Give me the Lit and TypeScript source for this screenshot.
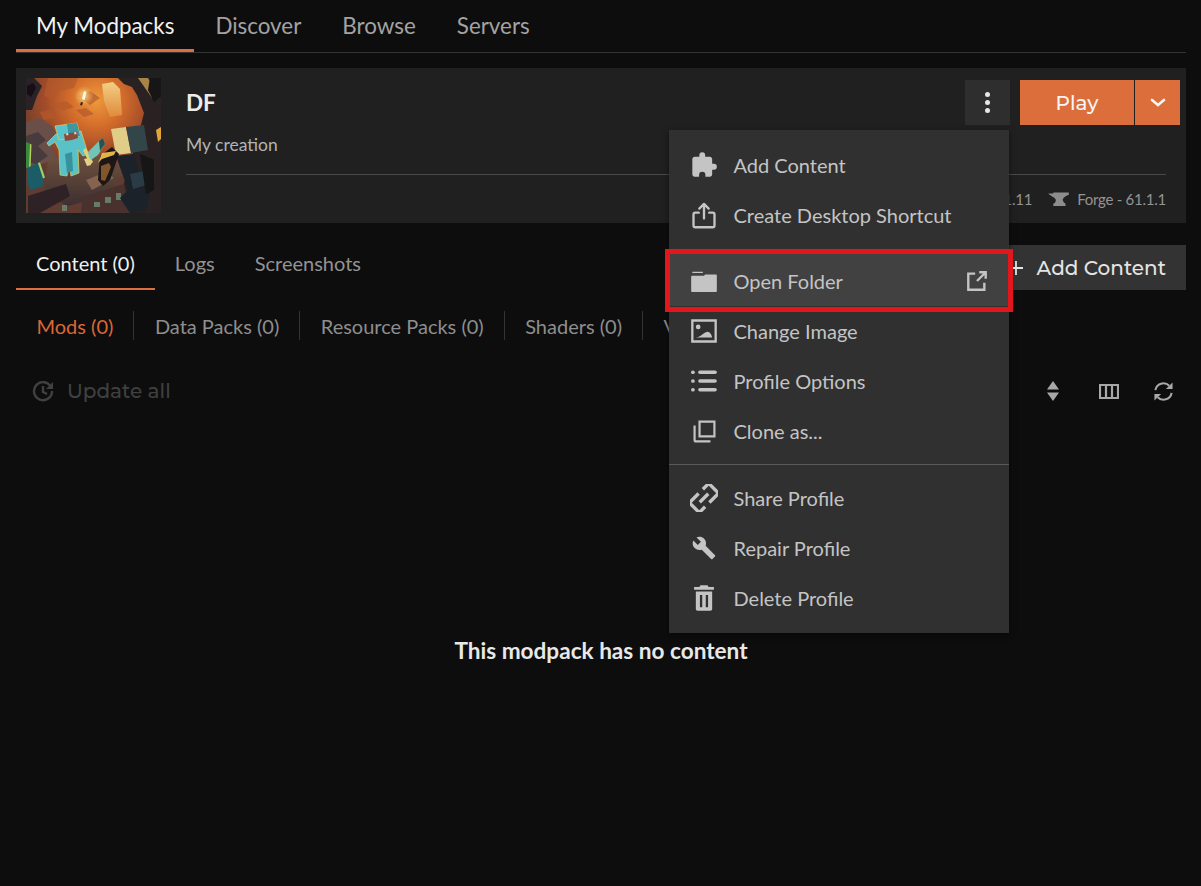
import { LitElement, html, css, svg } from "lit";
import { customElement } from "lit/decorators.js";

const icons: Record<string, unknown> = {
  puzzle: svg`<path fill="currentColor" d="M4 5h4V3.500a2.500 2.500 0 0 1 5 0V5h4c1.100 0 2 .900 2 2v4h1.500a2.500 2.500 0 0 1 0 5H19v4c0 1.100-.900 2-2 2h-3.800v-1.500a2.700 2.700 0 0 0-5.400 0V22H4c-1.100 0-2-.900-2-2V7c0-1.100.900-2 2-2z"/>`,
  upload: svg`<path fill="none" stroke="currentColor" stroke-width="2" stroke-linecap="round" stroke-linejoin="round" d="M12 15V3M8 6.500 12 2.500l4 4M7.500 10H4.500a1.500 1.500 0 0 0-1.500 1.500V21a1.500 1.500 0 0 0 1.500 1.500h15A1.500 1.500 0 0 0 21 21v-9.500A1.500 1.500 0 0 0 19.500 10h-3"/>`,
  folder: svg`<path fill="currentColor" d="M2 4h9v1.200H2zM2 7.500h10l1-1h9.200c.4 0 .8.400.8.800v13.200c0 .500-.400 1-.800 1H2c-.500 0-1-.400-1-1V8.500c0-.600.400-1 1-1z"/>`,
  external: svg`<path fill="none" stroke="currentColor" stroke-width="2.600" d="M10 4H2.500v17.500H20V14M12 12 21 3M14.500 2.500H21.500V9.500"/>`,
  image: svg`<path fill="none" stroke="currentColor" stroke-width="2" d="M2 3h20v18H2z"/><circle cx="7" cy="8.500" r="2" fill="currentColor"/><path fill="currentColor" d="M5 17.500c3-.2 4.500-1.500 7-3.500 1.500-1.200 3-2 4.500-1 1.200.8 2 2.500 2.500 4.500z"/>`,
  list: svg`<g fill="currentColor"><circle cx="2.500" cy="4.500" r="1.600"/><circle cx="2.500" cy="12" r="1.600"/><circle cx="2.500" cy="19.500" r="1.600"/><rect x="7" y="3" width="16" height="3" rx="1.500"/><rect x="7" y="10.500" width="16" height="3" rx="1.500"/><rect x="7" y="18" width="16" height="3" rx="1.500"/></g>`,
  clone: svg`<path fill="none" stroke="currentColor" stroke-width="2.200" transform="translate(12 12) scale(.85) translate(-12 -12)" d="M7.500 2.500h15v15h-15zM2.500 6.500v14.500a1.500 1.500 0 0 0 1.500 1.500h14.500"/>`,
  link: svg`<g fill="none" stroke="currentColor" stroke-width="2.500" transform="rotate(-45 12 12) translate(12 12) scale(1.150) translate(-12 -12)"><path d="M11.500 6.800H1.800v10.400H8"/><path d="M12.500 17.200h9.700V6.800H16"/><path d="M7.500 12H16.500"/></g>`,
  wrench: svg`<path fill="currentColor" transform="translate(12 12) scale(.88) translate(-12 -12)" d="M22.700 19l-9.100-9.100c.9-2.300.4-5-1.500-6.900-2-2-5-2.400-7.400-1.300L9 6 6 9 1.600 4.700C.4 7.100.9 10.100 2.900 12.100c1.900 1.900 4.600 2.400 6.900 1.500l9.100 9.100c.4.4 1 .4 1.400 0l2.300-2.300c.5-.4.5-1.100.1-1.400z"/>`,
  trash: svg`<path fill="currentColor" fill-rule="evenodd" d="M9 1h6l1 1.500h4.500V5h-17V2.500H8zM5 6.500h14v15c0 .8-.7 1.500-1.500 1.500h-11C5.700 23 5 22.300 5 21.500zM8.500 9.500v10.500h2V9.500zM13.500 9.500v10.500h2V9.500z"/>`,
};

const menuGroups = [
  [
    { icon: "puzzle", label: "Add Content" },
    { icon: "upload", label: "Create Desktop Shortcut" },
  ],
  [
    { icon: "folder", label: "Open Folder", hover: true },
    { icon: "image", label: "Change Image" },
    { icon: "list", label: "Profile Options" },
    { icon: "clone", label: "Clone as..." },
  ],
  [
    { icon: "link", label: "Share Profile" },
    { icon: "wrench", label: "Repair Profile" },
    { icon: "trash", label: "Delete Profile" },
  ],
];

// the pack artwork, built out of blocks
const art = svg`<svg class="art" viewBox="0 0 135 135" width="135" height="135">
  <defs>
    <radialGradient id="glow" gradientUnits="userSpaceOnUse" cx="70" cy="22" r="85">
      <stop offset="0" stop-color="#ee9a3c"/>
      <stop offset=".3" stop-color="#d56e2c"/>
      <stop offset=".6" stop-color="#a34c2a"/>
      <stop offset="1" stop-color="#5e3a30"/>
    </radialGradient>
    <linearGradient id="floor" x1="0" y1="0" x2="0" y2="1">
      <stop offset="0" stop-color="#72553f"/>
      <stop offset="1" stop-color="#3d2e30"/>
    </linearGradient>
    <linearGradient id="lit" x1="0" y1="0" x2="0" y2="1">
      <stop offset="0" stop-color="#f3cf86"/>
      <stop offset="1" stop-color="#e08a3a"/>
    </linearGradient>
    <radialGradient id="halo">
      <stop offset="0" stop-color="#ffe9a0" stop-opacity=".85"/>
      <stop offset="1" stop-color="#ffc860" stop-opacity="0"/>
    </radialGradient>
    <filter id="soft"><feGaussianBlur stdDeviation=".55"/></filter>
  </defs>
  <g filter="url(#soft)">
    <rect width="135" height="135" fill="url(#glow)"/>
    <g fill="#b35a2c" opacity=".7">
      <path d="M22 0h30l-4 10-14 3-6 8-10-3z"/>
      <path d="M52 18l12-5 10 7-10 7z"/>
      <path d="M28 26l12-3 8 6-12 4z"/>
      <path d="M50 32l10-2 8 6-10 3z"/>
      <path d="M14 34l10-2 6 8-12 2z"/>
    </g>
    <path fill="url(#lit)" d="M76 6l11-2 7 7 2 26-12 2-6-16z"/>
    <path fill="#6b5048" d="M0 44l14-4 12 8 8 14-8 6 4 12-14 6L0 90z"/>
    <path fill="#463a3e" d="M0 58l12-4 8 8-8 6 10 10-12 8-10-2z"/>
    <path fill="url(#floor)" d="M22 82l30-8 30 4 16 14-14 24-42 12-24-12z"/>
    <path fill="#846350" d="M60 102l20-8 8 6-22 12z"/>
    <path fill="#2d2326" d="M2 118l38-12 4 12-30 17H2z"/>
    <path fill="#48302e" d="M55 135l2-16 44-14 12 30z"/>
    <g fill="#6a7a68">
      <rect x="68" y="124" width="6" height="5"/>
      <rect x="79" y="119" width="6" height="6"/>
      <rect x="90" y="115" width="5" height="7"/>
      <rect x="36" y="127" width="5" height="6"/>
    </g>
    <path fill="#292024" d="M92 0h43v135h-30l-7-30 15-50 5-20-7-18-5-8-8-3z"/>
    <path fill="#a98448" d="M112 0h10l8 14-4 6z"/>
    <path fill="#141216" d="M124 0h11v18l-7 6-6-12z"/>
    <path fill="#dfa538" d="M130 52l5-3v12l-3 3z"/>
    <path fill="#2a2226" d="M0 0h8l8 8-5 10-5 14H0z"/>
    <path fill="#131013" d="M1 8l6-3 3 5-5 9-4-3z"/>
    <path fill="#1a2229" d="M90 78l18-2 8 30 10 2-6 24-16 3-10-15 8-8z"/>
    <path fill="#2a3a44" d="M104 96l14-3 3 14-14 4z"/>
    <path fill="#121419" d="M114 76l14 6 0 30-8 4z"/>
    <path fill="#dfcd88" d="M85 51l15-2 5 26-15 2z"/>
    <path fill="#324548" d="M100 49l18-2 4 25-17 3z"/>
    <path fill="#1a1512" d="M74 78l12-9 7 7-9 26-7 6-5-6z"/>
    <path fill="#e1b44a" d="M76 75l14-2-2 4-12 4-4 4z"/>
    <path fill="#80562c" d="M75 88l8-3 2 4-6 14-4-1z"/>
    <path fill="#3a8a3a" d="M0 64l5 2-1 24H0z"/>
    <path fill="#b4d060" d="M4 66l1.500 .5-1 24H3z"/>
    <path fill="#1d5c66" d="M1 90l11-5 6 15-2 9-12 3-3-9z"/>
    <path fill="#9cd468" d="M12 85l2-.5 5 15-2 1z"/>
    <g stroke="#e6cf5a" stroke-width=".7">
      <path fill="#59c2c8" d="M33 72l-4-8-6 4-2-3 9-9 6-1 13-1 6-1 4 13 3 10-5 2-5-6 1 23-8 3-2-12-2 12-7-1z"/>
      <path fill="#59c4cc" d="M29 48l22-3 3 13-21 4z"/>
    </g>
    <path fill="#3b98a0" d="M41 46l10-1 3 13-11 2z"/>
    <path fill="#38929c" d="M39 76l7-2 1 19-6 2z"/>
    <path fill="#8a4c3e" d="M38 56l13-2 1 6-6 2-7 1z"/>
    <path fill="#e6d8cc" d="M40 55.500l2-.5.5 2-2 .5zM48 54.500l2-.5.5 2-2 .5z"/>
    <path fill="#e6cf98" d="M58 81l5-1 2 7-4 1z"/>
    <path fill="#e3d072" d="M57 72l3-2 7 14-3 3z"/>
    <path fill="#72c4b4" d="M62 74l11-11 4-3 2 6-7 11-7 5-2-3z"/>
    <path fill="#2e5050" d="M73 63l4-3 2 6-5 7z"/>
  </g>
  <circle cx="58" cy="18" r="10" fill="url(#halo)"/>
  <path fill="#fffbe0" d="M58 13l2.500 1-2 8-2.500-1z"/>
  <path fill="#3a2418" d="M55 24l2 .5-1 3-2-.5z"/>
</svg>`;

@customElement("app-root")
export class AppRoot extends LitElement {
  static styles = css`
    :host {
      display: block;
      position: relative;
      width: 1201px;
      height: 886px;
      overflow: hidden;
      background: #0d0d0d;
      font-family: Lato, "Liberation Sans", sans-serif;
      color: #a6a6a6;
    }
    .page {
      padding: 0 15px 0 16px;
    }
    .main-tabs {
      display: flex;
      height: 52px;
      border-bottom: 1px solid #333;
    }
    .main-tabs .tab {
      height: 52px;
      box-sizing: border-box;
      padding: 2px 20px 3px;
      display: flex;
      align-items: center;
      font-size: 22.400px;
      margin-right: 1px;
      color: #a3a3a3;
    }
    .main-tabs .tab.on {
      color: #f2f2f2;
      border-bottom: 3px solid #dd6f3e;
      padding-bottom: 0;
    }
    .card {
      margin-top: 15px;
      height: 155px;
      background: #202020;
      display: flex;
    }
    .art {
      display: block;
      margin: 10px 25px 10px 10px;
      flex: none;
    }
    .info {
      flex: 1;
      display: flex;
      flex-direction: column;
      padding: 12px 6px 0 0;
    }
    .head {
      display: flex;
      align-items: center;
      height: 45px;
    }
    .title {
      flex: 1;
      font-size: 22.500px;
      font-weight: 700;
      color: #ececec;
    }
    .kebab {
      width: 45px;
      height: 45px;
      background: #2e2e2e;
      margin-right: 10px;
      display: flex;
      flex-direction: column;
      align-items: center;
      justify-content: center;
      gap: 3px;
    }
    .kebab i {
      width: 5px;
      height: 5px;
      border-radius: 50%;
      background: #e6e6e6;
    }
    .play {
      width: 114px;
      height: 45px;
      background: #dc6e3c;
      color: #f5f5f5;
      font-family: Montserrat, Inter, sans-serif;
      font-size: 20px;
      font-weight: 500;
      display: flex;
      align-items: center;
      justify-content: center;
    }
    .drop {
      width: 45px;
      height: 45px;
      margin-left: 1px;
      background: #dc6e3c;
      display: flex;
      align-items: center;
      justify-content: center;
      color: #f5f5f5;
    }
    .sub {
      font-size: 17.500px;
      margin-top: 8px;
      line-height: 24px;
      color: #b3b3b3;
    }
    .meta {
      margin: 17px 14px 0 0;
      border-top: 1px solid #4a4a4a;
      flex: 1;
      display: flex;
      justify-content: flex-end;
      align-items: center;
      gap: 15px;
      font-size: 15px;
      letter-spacing: -0.25px;
      color: #949494;
    }
    .meta span {
      display: flex;
      align-items: center;
      gap: 7px;
    }
    .content-bar {
      display: flex;
      justify-content: space-between;
      margin-top: 22px;
      height: 45px;
    }
    .sub-tabs {
      display: flex;
    }
    .sub-tabs .tab {
      box-sizing: border-box;
      padding: 0 20px 9px;
      display: flex;
      align-items: center;
      font-size: 20px;
      color: #939393;
    }
    .sub-tabs .tab.on {
      color: #f0f0f0;
      border-bottom: 2px solid #dd6f3e;
      padding-bottom: 7px;
    }
    .add {
      background: #333;
      color: #e4e4e4;
      font-family: Montserrat, Inter, sans-serif;
      font-size: 20px;
      font-weight: 500;
      padding: 0 20px;
      display: flex;
      align-items: center;
      gap: 14px;
    }
    .filters {
      display: flex;
      margin: 21px 0 0 0;
      font-size: 20px;
      color: #8e8e8e;
    }
    .filters span {
      height: 29px;
      display: flex;
      align-items: center;
      padding: 0 20px 0 20.500px;
      border-right: 1px solid #333;
      white-space: nowrap;
    }
    .filters span.on {
      color: #dd6636;
    }
    .filters span.cut {
      border-right: none;
    }
    .tools {
      display: flex;
      align-items: center;
      margin-top: 36px;
      padding-left: 16px;
      height: 30px;
    }
    .update {
      flex: 1;
      display: flex;
      align-items: center;
      gap: 13px;
      color: #404040;
      font-family: Montserrat, Inter, sans-serif;
      font-size: 20px;
      font-weight: 500;
    }
    .tool-icons {
      display: flex;
      align-items: center;
      gap: 34px;
      color: #a8a8a8;
      padding-right: 12px;
    }
    .empty {
      margin-top: 231px;
      text-align: center;
      font-size: 22.600px;
      font-weight: 700;
      color: #e8e8e8;
    }
    .menu {
      position: absolute;
      left: 669px;
      top: 130px;
      width: 340px;
      box-sizing: border-box;
      padding: 10px 0;
      background: #303030;
      box-shadow: 0 2px 6px rgba(0, 0, 0, 0.5);
      color: #c4c4c4;
      font-size: 20px;
    }
    .menu hr {
      border: none;
      height: 1px;
      margin: 8px 0;
      background: #595959;
    }
    .menu hr.first {
      margin: 9px 0 6px;
    }
    .item {
      height: 50px;
      display: flex;
      align-items: center;
      padding: 0 21px;
      gap: 15.500px;
      position: relative;
    }
    .item svg.ic {
      width: 28px;
      height: 28px;
      flex: none;
    }
    .item svg.ic.ext {
      width: 22px;
      height: 22px;
    }
    .item .lbl {
      flex: 1;
    }
    .item.hover {
      background: #414141;
      box-shadow: 0 -2px 0 #414141;
    }
    .item.hover::after {
      content: "";
      position: absolute;
      inset: -7px -4px -6px -4px;
      border: 5px solid #e3161b;
    }
  `;

  render() {
    return html`
      <div class="page">
        <nav class="main-tabs">
          <div class="tab on">My Modpacks</div>
          <div class="tab">Discover</div>
          <div class="tab">Browse</div>
          <div class="tab">Servers</div>
        </nav>

        <section class="card">
          ${art}
          <div class="info">
            <div class="head">
              <div class="title">DF</div>
              <div class="kebab"><i></i><i></i><i></i></div>
              <div class="play">Play</div>
              <div class="drop">
                <svg width="16" height="10" viewBox="0 0 16 10"><path d="M2 2l6 5 6-5" fill="none" stroke="currentColor" stroke-width="2.600" stroke-linecap="round"/></svg>
              </div>
            </div>
            <div class="sub">My creation</div>
            <div class="meta">
              <span>1.21.11</span>
              <span>
                <svg width="23" height="15" viewBox="0 0 22 16"><path fill="#8d8d8d" d="M0 1.500h5.500V0.500H22V3c-2.500 1.200-5.500 2-6.500 5 0 1.500 1 3.500 3 4.500V15H5.500v-2.500c2-1 3-2.500 2.500-4.500C7.500 6 4 5 0 1.500z"/></svg>
                Forge - 61.1.1
              </span>
            </div>
          </div>
        </section>

        <div class="content-bar">
          <div class="sub-tabs">
            <div class="tab on">Content (0)</div>
            <div class="tab">Logs</div>
            <div class="tab">Screenshots</div>
          </div>
          <div class="add">
            <svg width="14" height="14" viewBox="0 0 14 14"><path d="M7 0v14M0 7h14" stroke="currentColor" stroke-width="1.800"/></svg>
            Add Content
          </div>
        </div>

        <div class="filters">
          <span class="on">Mods (0)</span>
          <span>Data Packs (0)</span>
          <span>Resource Packs (0)</span>
          <span>Shaders (0)</span>
          <span class="cut">V</span>
        </div>

        <div class="tools">
          <div class="update">
            <svg width="22" height="22" viewBox="0 0 22 22"><g fill="none" stroke="currentColor" stroke-width="2.400"><path d="M19 7A9 9 0 1 0 20 11"/><path d="M11 6v6l4 2"/></g><path d="M21 2v7h-7z" fill="currentColor"/></svg>
            Update all
          </div>
          <div class="tool-icons">
            <svg width="18" height="20" viewBox="0 0 18 20"><path fill="currentColor" d="M6 0l6 8.500H0zM0 11.500h12L6 20z"/></svg>
            <svg width="20" height="15" viewBox="0 0 20 15"><path fill="none" stroke="currentColor" stroke-width="2.200" d="M1 1h18v13H1zM7 1v13M13 1v13"/></svg>
            <svg width="21" height="21" viewBox="0 0 22 22"><g fill="none" stroke="currentColor" stroke-width="2.200"><path d="M2.500 9.500A8.500 8.500 0 0 1 17 5"/><path d="M19.500 12.500A8.500 8.500 0 0 1 5 17"/></g><path fill="currentColor" d="M20.500 1.500v7h-7zM1.500 20.500v-7h7z"/></svg>
          </div>
        </div>

        <div class="empty">This modpack has no content</div>
      </div>

      <div class="menu">
        ${menuGroups.map(
          (group, i) => html`
            ${i > 0 ? html`<hr class="${i === 1 ? "first" : ""}" />` : ""}
            ${group.map(
              (it) => html`
                <div class="item ${(it as any).hover ? "hover" : ""}">
                  <svg class="ic" viewBox="0 0 24 24">${icons[it.icon]}</svg>
                  <span class="lbl">${it.label}</span>
                  ${(it as any).hover
                    ? html`<svg class="ic ext" viewBox="0 0 24 24">${icons.external}</svg>`
                    : ""}
                </div>
              `,
            )}
          `,
        )}
      </div>
    `;
  }
}
